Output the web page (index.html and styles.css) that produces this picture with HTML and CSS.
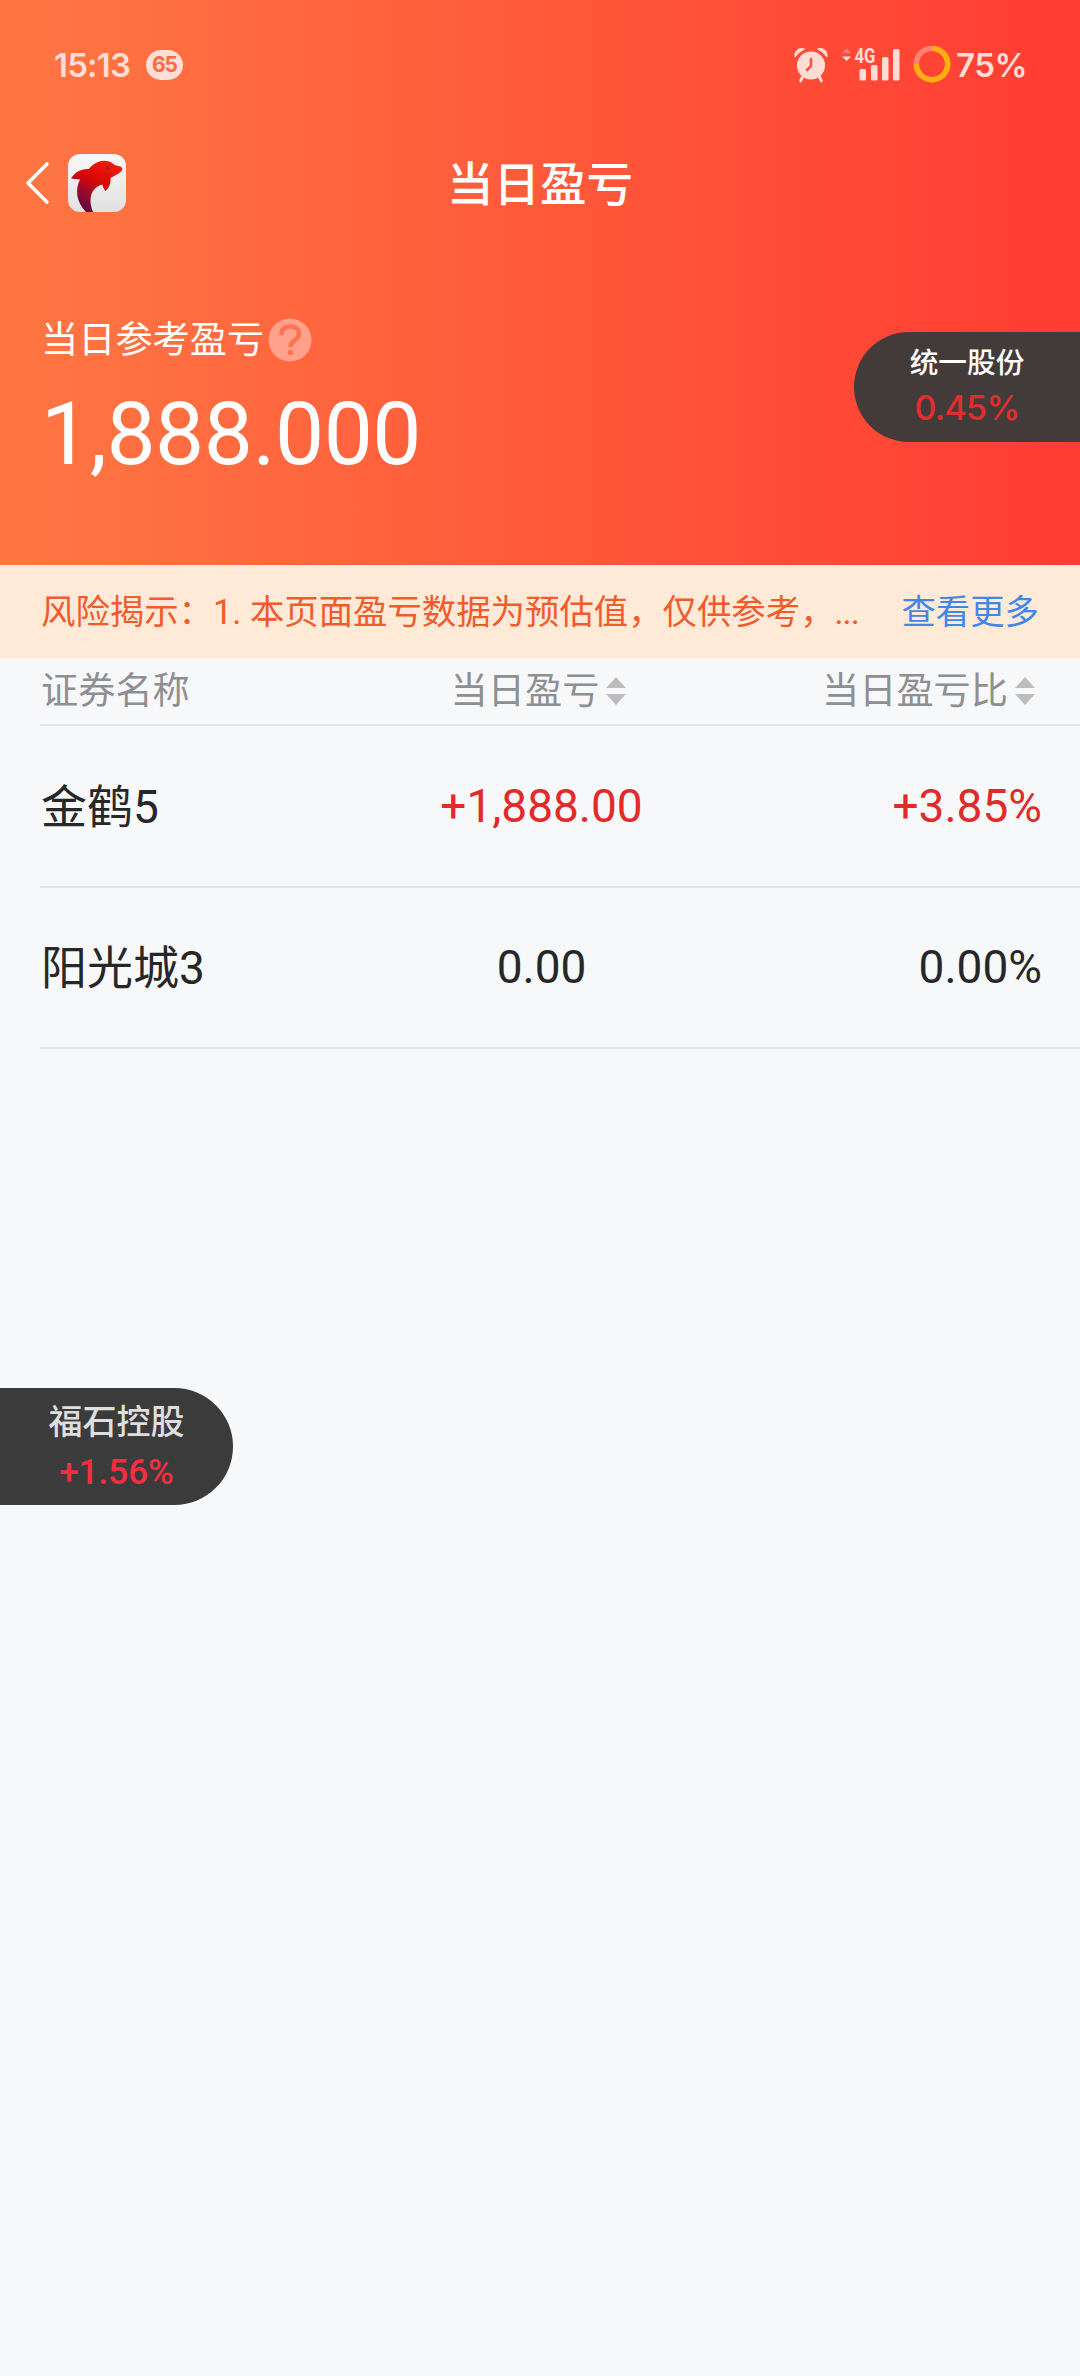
FILE: index.html
```html
<!DOCTYPE html>
<html lang="zh-CN">
<head>
<meta charset="utf-8">
<title>当日盈亏</title>
<link rel="stylesheet" href="styles.css">
</head>
<body>
<header class="hero">
  <div class="status">
    <span class="time">15:13</span>
    <span class="count">65</span>
    <svg class="alarm" width="34" height="36" viewBox="0 0 34 36">
      <path d="M1 10C0 4 5 0 10.500 2Q5 4.500 1 10ZM23.500 2C29 0 34 4 33 10Q29 4.500 23.500 2Z" fill="currentColor" stroke="currentColor" stroke-linejoin="round"/>
      <path d="M8.500 30L6.500 34M25.500 30L27.500 34" stroke="currentColor" stroke-width="2.800" stroke-linecap="round"/>
      <circle cx="17" cy="18.500" r="14" fill="currentColor"/>
      <path d="M17 12V19L13 23" fill="none" stroke="#ff5039" stroke-width="2.500" stroke-linecap="round"/>
    </svg>
    <svg class="signal" width="60" height="44" viewBox="0 -4 60 44">
      <path d="M2 6L6.500 1.500L11 6Z" fill="currentColor" opacity=".4"/>
      <path d="M2 9.500H11L6.500 14Z" fill="currentColor"/>
      <text x="14.500" y="15.500" class="net" textLength="21" lengthAdjust="spacingAndGlyphs">4G</text>
      <g fill="currentColor"><rect x="19.500" y="22" width="6.500" height="11.500" rx="1.500"/><rect x="31" y="18" width="6.500" height="15.500" rx="1.500"/><rect x="42" y="10" width="6.500" height="23.500" rx="1.500"/><rect x="53" y="2" width="6.500" height="31.500" rx="1.500"/></g>
    </svg>
    <svg class="battery" width="38" height="38" viewBox="0 0 38 38">
      <circle cx="19" cy="18" r="15.700" fill="none" stroke="#ff8175" stroke-width="5.500"/>
      <path d="M19 2.300A15.700 15.700 0 1 1 3.300 18" fill="none" stroke="#ffae0b" stroke-width="5.500"/>
    </svg>
    <span class="percent">75%</span>
  </div>
  <nav class="nav">
    <svg class="back" width="26" height="44" viewBox="0 0 26 44"><path d="M22 3L3 22L22 41" fill="none" stroke="#fff" stroke-width="3.600" stroke-linecap="round" stroke-linejoin="round"/></svg>
    <svg class="logo" width="58" height="58" viewBox="0 0 58 58">
      <defs>
        <linearGradient id="tile" x1="0" y1="0" x2="0" y2="1"><stop offset="0" stop-color="#f8f8f8"/><stop offset="1" stop-color="#e1e1e1"/></linearGradient>
        <linearGradient id="skin" x1=".7" y1="0" x2=".2" y2="1"><stop offset="0" stop-color="#f31b08"/><stop offset=".4" stop-color="#d80707"/><stop offset=".7" stop-color="#8e0a33"/><stop offset="1" stop-color="#5b073f"/></linearGradient>
      </defs>
      <rect width="58" height="58" rx="12" fill="url(#tile)"/>
      <path d="M3 24.500C7 18 13 14.500 21 15C27 7 38 4 45.500 10C47 12.500 53.500 11 54.500 14.500C54 19 47 21 42.500 24C43 29 41 34 37.500 37C35.500 35 34.500 32 34.500 30.500C25 33 19 42 25 58H18C8 48 7 35 12 25.500C9 25 6 25 3 24.500Z" fill="url(#skin)"/>
      <circle cx="39.500" cy="14" r="1.800" fill="#6f3937"/>
    </svg>
    <h1 class="title">当日盈亏</h1>
  </nav>
  <section class="summary">
    <div class="label"><span>当日参考盈亏</span>
      <svg class="help" width="44" height="44" viewBox="0 0 44 44"><circle cx="22" cy="22" r="21.500" fill="#ffa18b"/><path d="M13.500 17C13 10 18 8.500 22 8.500C27 8.500 31 11 31 16C31 22 22.500 22 22.500 29" fill="none" stroke="#ff7253" stroke-width="4.500"/><circle cx="22.500" cy="34.500" r="2.800" fill="#ff7253"/></svg>
    </div>
    <div class="amount">1,888.000</div>
  </section>
</header>
<div class="notice"><p class="risk">风险揭示：1. 本页面盈亏数据为预估值，仅供参考，<span class="dots">...</span></p><a class="more">查看更多</a></div>
<main class="table">
  <div class="row head">
    <span class="caption">证券名称</span>
    <span class="mid"><span class="caption">当日盈亏</span><svg class="sort" width="20" height="28" viewBox="0 0 20 28"><path d="M0 11L10 0L20 11ZM0 17H20L10 28Z" fill="#bdbdbd"/></svg></span>
    <span class="end"><span class="caption">当日盈亏比</span><svg class="sort" width="20" height="28" viewBox="0 0 20 28"><path d="M0 11L10 0L20 11ZM0 17H20L10 28Z" fill="#bdbdbd"/></svg></span>
  </div>
  <div class="row up"><span class="name">金鹤5</span><span class="mid">+1,888.00</span><span class="end">+3.85%</span></div>
  <div class="row"><span class="name">阳光城3</span><span class="mid">0.00</span><span class="end">0.00%</span></div>
</main>
<aside class="float right"><span class="stock">统一股份</span><span class="change">0.45%</span></aside>
<aside class="float left"><span class="stock">福石控股</span><span class="change">+1.56%</span></aside>
</body>
</html>
```
FILE: styles.css
```css
* { box-sizing: border-box; }
body { margin: 0; width: 1080px; height: 2376px; position: relative; overflow: hidden; background: #f7f8fa; color: #272727; font-family: Roboto, "Noto Sans CJK SC", sans-serif; }
svg { display: block; flex: none; }
.hero { height: 565px; background: linear-gradient(90deg, #ff7743, #ff3c32); color: #fff; }
.status { display: flex; align-items: center; height: 130px; padding-left: 54px; color: #ffdcd5; font: 600 33px/40px Inter, sans-serif; }
.time { width: 92px; letter-spacing: -.8px; }
.count { width: 37px; height: 30px; border-radius: 15px; background: #ffdfd6; color: #ff6b40; font-size: 21px; font-weight: 700; line-height: 30px; letter-spacing: -1px; text-align: center; }
.alarm { margin-left: 611px; }
.signal { margin-left: 12px; overflow: visible; }
.net { font: 700 19.500px Roboto, sans-serif; fill: currentColor; }
.battery { margin-left: 13px; }
.percent { margin-left: 5px; letter-spacing: -.5px; }
.nav { display: flex; align-items: center; height: 106px; padding-left: 25px; }
.logo { margin-left: 17px; }
.title { margin: 0 0 0 321px; padding-top: 3px; font-size: 46.500px; font-weight: 500; line-height: 60px; }
.summary { padding: 76px 0 0 41px; }
.label { display: flex; align-items: center; height: 56px; font-size: 37.200px; gap: 4px; }
.label span { padding-bottom: 7px; }
.caption { padding-bottom: 6px; }
.amount { margin-top: 15px; font-size: 87.500px; line-height: 103px; letter-spacing: -.5px; }
.notice { display: flex; align-items: center; justify-content: space-between; height: 93px; padding: 0 41px 6px; background: #ffead8; font-size: 34.400px; }
.risk { margin: 0; color: #f15b2c; white-space: nowrap; }
.dots { letter-spacing: -1px; }
.more { color: #4187e8; }
.table { padding-left: 40px; }
.row { display: grid; grid-template-columns: 320px 361px 1fr; align-items: center; height: 161.500px; padding: 0 38px 0 1px; border-bottom: 2px solid #e3e4e7; font-size: 46px; }
.head { grid-template-columns: 320px 355px 1fr; height: 68px; font-size: 37.200px; color: #8f8f92; padding-right: 45px; }
.mid, .end { display: flex; align-items: center; justify-content: center; gap: 7px; }
.end { justify-content: flex-end; }
.name { padding-bottom: 6px; }
.up .mid, .up .end { color: #e22a2a; }
.float { position: absolute; display: flex; flex-direction: column; align-items: center; }
.right { right: 0; top: 332px; width: 226px; height: 110px; padding-top: 8px; border-radius: 55px 0 0 55px; background: #433b3a; color: #fff; font: 500 28.700px/42px "Noto Sans CJK SC", sans-serif; }
.left { left: 0; top: 1388px; width: 233px; height: 117px; padding-top: 8px; border-radius: 0 58.500px 58.500px 0; background: #3b3b3b; color: #dedede; font: 500 34px/48px "Noto Sans CJK SC", sans-serif; }
.right .change { color: #e32d2d; font: 500 34px/51px Inter, sans-serif; letter-spacing: -.7px; }
.left .change { color: #f72e40; font: 500 35px/58px Roboto, sans-serif; }
```
